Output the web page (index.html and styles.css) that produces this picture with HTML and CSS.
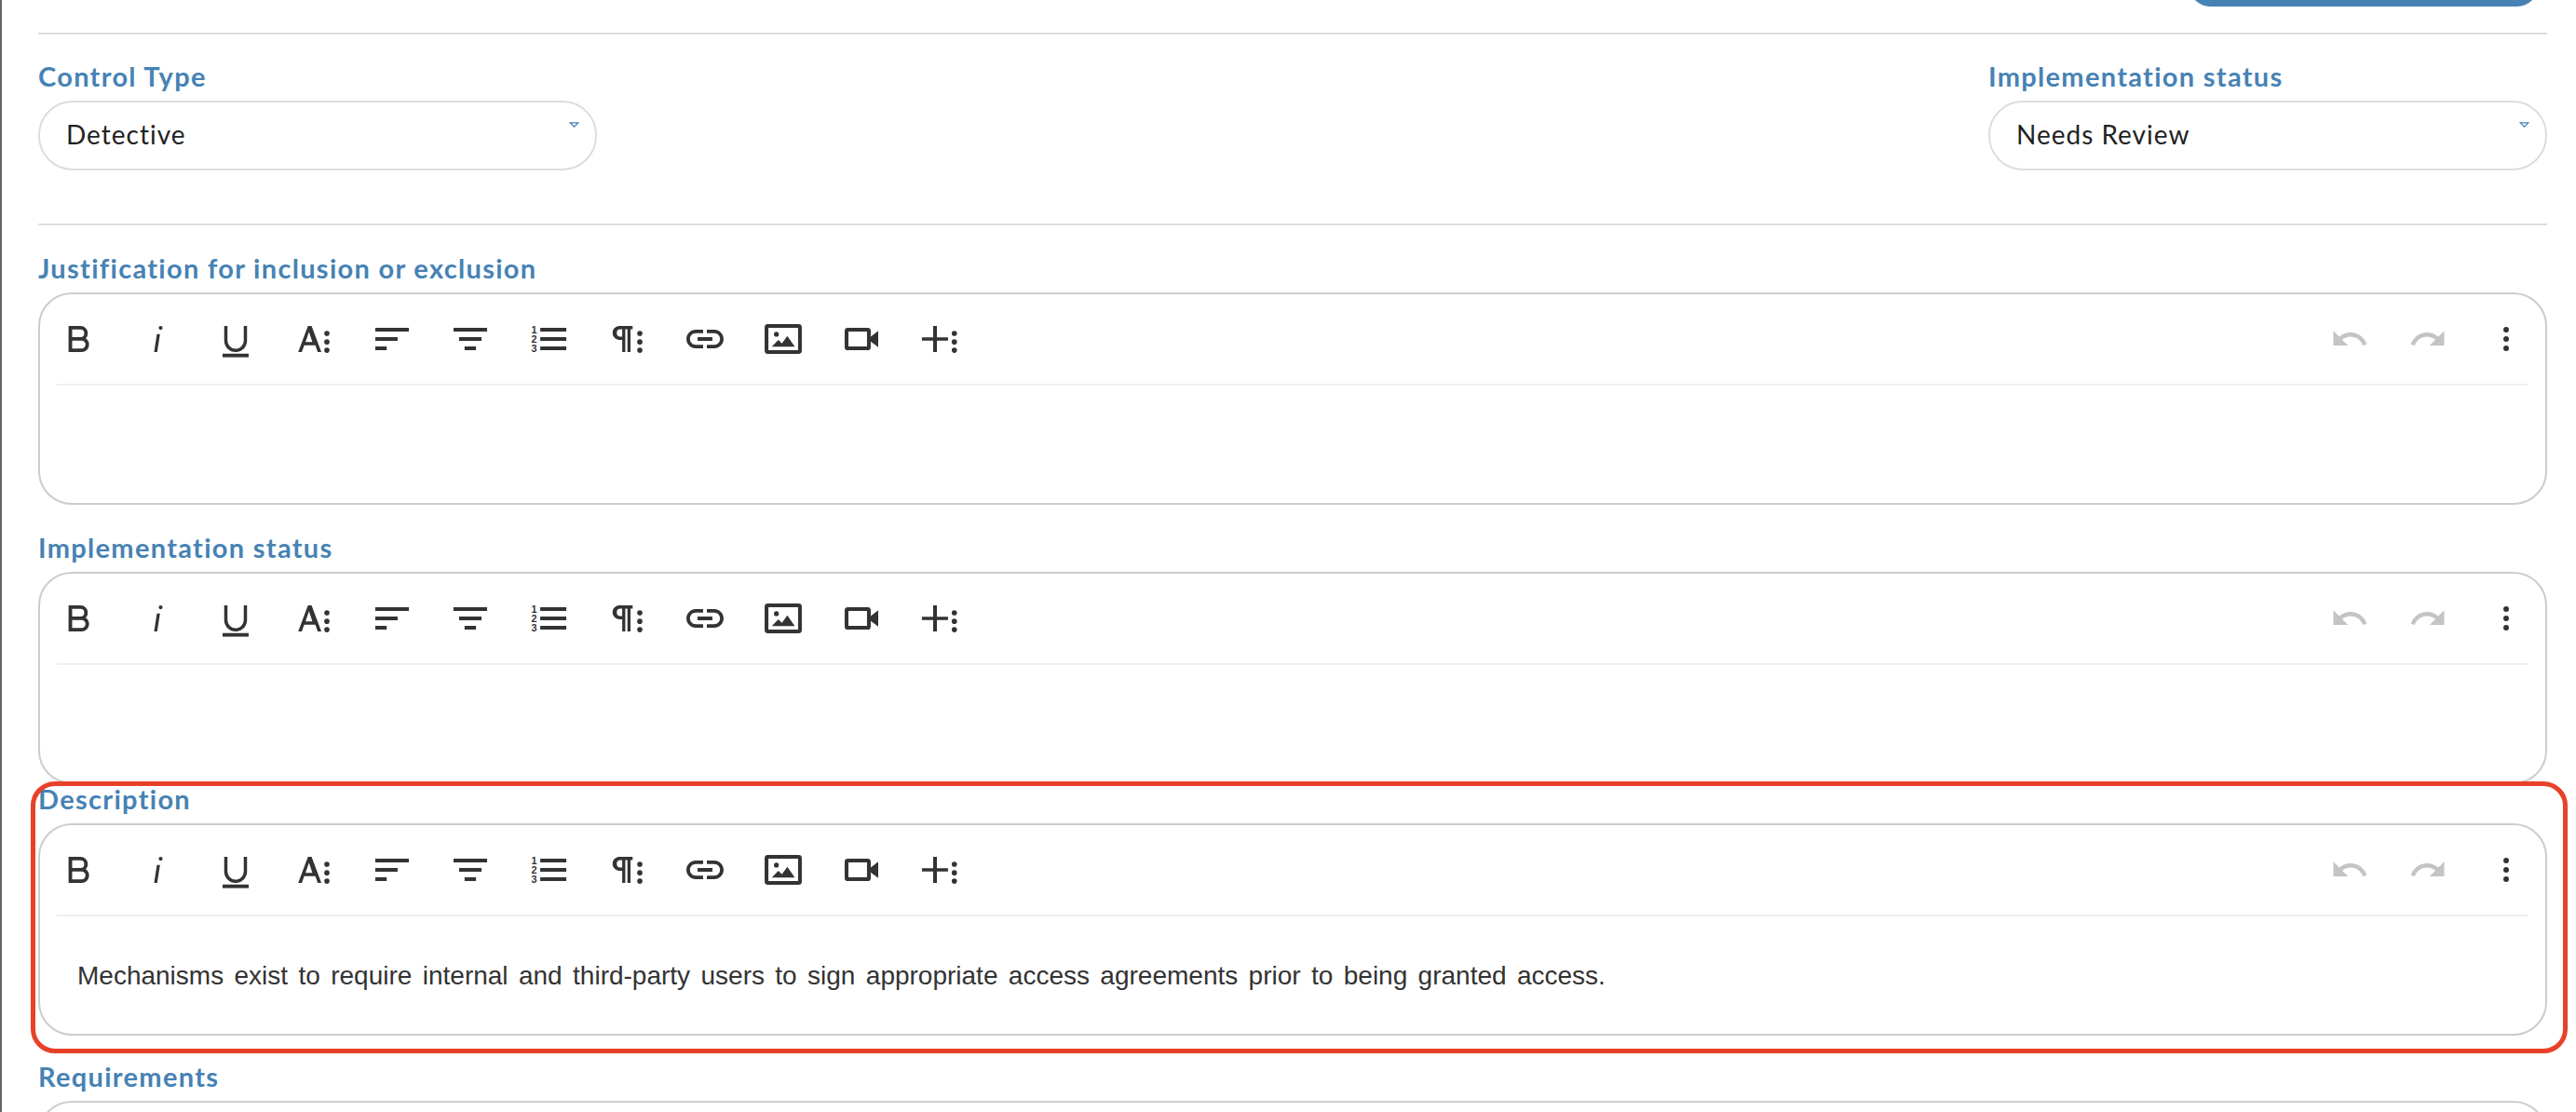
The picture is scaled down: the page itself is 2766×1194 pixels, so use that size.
FILE: index.html
```html
<!DOCTYPE html>
<html lang="en">
<head>
    <meta charset="UTF-8">
    <title>Control details</title>
    <link rel="stylesheet" href="styles.css">
</head>
<body>
    <svg class="sprite" xmlns="http://www.w3.org/2000/svg">
        <symbol id="i-bold" viewBox="0 0 24 24"><path d="M6.6 5.1h6.2a3.4 3.4 0 0 1 0 6.8H6.6zM6.6 11.9h6.9a3.5 3.5 0 0 1 0 7H6.6z" fill="none" stroke="#333" stroke-width="2.2"/></symbol>
        <symbol id="i-italic" viewBox="0 0 24 24"><path d="M11.7 9h1.9l-1.7 11H10z"/><circle cx="14" cy="5.2" r="1.2"/></symbol>
        <symbol id="i-underline" viewBox="0 0 24 24"><path d="M6 4v9a6 6 0 0 0 12 0V4" fill="none" stroke="#333" stroke-width="2"/><path d="M4 21h16v2.2H4z"/></symbol>
        <symbol id="i-font" viewBox="0 0 24 24"><path fill-rule="evenodd" d="M8.4 4h2.2l6 16h-2.2l-1.5-4.1H6.1L4.6 20H2.4zM6.9 13.9h4.2L9 7.5z"/><circle cx="20" cy="8.6" r="1.6"/><circle cx="20" cy="13.8" r="1.6"/><circle cx="20" cy="18.9" r="1.6"/></symbol>
        <symbol id="i-left" viewBox="0 0 24 24"><path d="M1.7 5.1h20.6v2.3H1.7zM1.7 10.9h13.7v2.3H1.7zM1.7 16.6h7v2.3h-7z"/></symbol>
        <symbol id="i-center" viewBox="0 0 24 24"><path d="M1.7 5.1h20.6v2.3H1.7zM5.1 10.9h13.8v2.3H5.1zM8.5 16.6h7v2.3h-7z"/></symbol>
        <symbol id="i-ol" viewBox="0 0 24 24"><path d="M6.9 5.1h16v2.3h-16zM6.9 10.9h16v2.3h-16zM6.9 16.6h16v2.3h-16z"/><text class="ol-num" x="1.4" y="8.8">1</text><text class="ol-num" x="1.4" y="14.4">2</text><text class="ol-num" x="1.4" y="20">3</text></symbol>
        <symbol id="i-para" viewBox="0 0 24 24"><path d="M7 4h8.6v2h-1.3v14h-1.9V6h-1.3v14H9.2v-7.5h-1.2A4.25 4.25 0 0 1 7 4zm1.1 2a2.25 2.25 0 0 0 0 4.5h1.1V6z" fill-rule="evenodd"/><circle cx="20" cy="8.6" r="1.6"/><circle cx="20" cy="13.8" r="1.6"/><circle cx="20" cy="18.9" r="1.6"/></symbol>
        <symbol id="i-link" viewBox="0 0 24 24"><path transform="translate(12 12) scale(1.14) translate(-12 -12)" d="M3.9 12c0-1.71 1.39-3.1 3.1-3.1h4V7H7c-2.76 0-5 2.24-5 5s2.24 5 5 5h4v-1.9H7c-1.71 0-3.1-1.39-3.1-3.1zM8 13h8v-2H8v2zm9-6h-4v1.9h4c1.71 0 3.1 1.39 3.1 3.1s-1.39 3.1-3.1 3.1h-4V17h4c2.76 0 5-2.24 5-5s-2.24-5-5-5z"/></symbol>
        <symbol id="i-image" viewBox="0 0 24 24"><rect x="1.75" y="4.05" width="20.5" height="15.9" rx="0.8" fill="none" stroke="#333" stroke-width="2.3"/><circle cx="7.8" cy="9.1" r="1.5"/><path d="M5 16.7l4-4.2 2.2 2.2 3.3-4.5 4.6 6.5z"/></symbol>
        <symbol id="i-video" viewBox="0 0 24 24"><rect x="2.85" y="6.25" width="13.7" height="11.5" rx="0.8" fill="none" stroke="#333" stroke-width="2.3"/><path d="M17.7 10.5l4.6-3.5v10l-4.6-3.5z"/></symbol>
        <symbol id="i-plus" viewBox="0 0 24 24"><path d="M8 4h2.3v7h6.8v2h-6.8v7H8v-7H1.1v-2H8z"/><circle cx="21" cy="8.6" r="1.6"/><circle cx="21" cy="13.8" r="1.6"/><circle cx="21" cy="18.9" r="1.6"/></symbol>
        <symbol id="i-undo" viewBox="0 0 24 24"><path d="M12.5 8c-2.65 0-5.05.99-6.9 2.6L2 7v9h9l-3.62-3.62c1.39-1.16 3.16-1.88 5.12-1.88 3.54 0 6.55 2.31 7.6 5.5l2.37-.78C21.08 11.03 17.15 8 12.5 8z"/></symbol>
        <symbol id="i-redo" viewBox="0 0 24 24"><path d="M18.4 10.6C16.55 8.99 14.15 8 11.5 8c-4.65 0-8.58 3.03-9.96 7.22L3.9 16c1.05-3.19 4.05-5.5 7.6-5.5 1.95 0 3.73.72 5.12 1.88L13 16h9V7l-3.6 3.6z"/></symbol>
        <symbol id="i-more" viewBox="0 0 24 24"><circle cx="12" cy="6.3" r="1.7"/><circle cx="12" cy="12" r="1.7"/><circle cx="12" cy="17.7" r="1.7"/></symbol>
        <symbol id="i-arrow" viewBox="0 0 11 6"><path d="M1.2 .8h8.6L5.5 5.2z" fill="none" stroke="#4682b4" stroke-width="1.2"/></symbol>
    </svg>

    <div class="page">
        <div class="top-bar">
            <button class="save-button" type="button" aria-label="Save"></button>
        </div>

        <div class="select-row">
            <div class="select-field">
                <label class="field-label">Control Type</label>
                <div class="select-wrap">
                    <select class="select-box"><option>Detective</option></select>
                    <svg class="select-arrow"><use href="#i-arrow"/></svg>
                </div>
            </div>
            <div class="select-field">
                <label class="field-label">Implementation status</label>
                <div class="select-wrap">
                    <select class="select-box"><option>Needs Review</option></select>
                    <svg class="select-arrow"><use href="#i-arrow"/></svg>
                </div>
            </div>
        </div>

        <div class="field">
            <label class="field-label">Justification for inclusion or exclusion</label>
            <div class="editor">
                <div class="toolbar">
                    <button class="tool" type="button"><svg><use href="#i-bold"/></svg></button>
                    <button class="tool" type="button"><svg><use href="#i-italic"/></svg></button>
                    <button class="tool" type="button"><svg><use href="#i-underline"/></svg></button>
                    <button class="tool" type="button"><svg><use href="#i-font"/></svg></button>
                    <button class="tool" type="button"><svg><use href="#i-left"/></svg></button>
                    <button class="tool" type="button"><svg><use href="#i-center"/></svg></button>
                    <button class="tool" type="button"><svg><use href="#i-ol"/></svg></button>
                    <button class="tool" type="button"><svg><use href="#i-para"/></svg></button>
                    <button class="tool" type="button"><svg><use href="#i-link"/></svg></button>
                    <button class="tool" type="button"><svg><use href="#i-image"/></svg></button>
                    <button class="tool" type="button"><svg><use href="#i-video"/></svg></button>
                    <button class="tool" type="button"><svg><use href="#i-plus"/></svg></button>
                    <button class="tool tool-off tool-push" type="button"><svg><use href="#i-undo"/></svg></button>
                    <button class="tool tool-off" type="button"><svg><use href="#i-redo"/></svg></button>
                    <button class="tool" type="button"><svg><use href="#i-more"/></svg></button>
                </div>
                <div class="editor-body"></div>
            </div>
        </div>

        <div class="field field-tight">
            <label class="field-label">Implementation status</label>
            <div class="editor">
                <div class="toolbar">
                    <button class="tool" type="button"><svg><use href="#i-bold"/></svg></button>
                    <button class="tool" type="button"><svg><use href="#i-italic"/></svg></button>
                    <button class="tool" type="button"><svg><use href="#i-underline"/></svg></button>
                    <button class="tool" type="button"><svg><use href="#i-font"/></svg></button>
                    <button class="tool" type="button"><svg><use href="#i-left"/></svg></button>
                    <button class="tool" type="button"><svg><use href="#i-center"/></svg></button>
                    <button class="tool" type="button"><svg><use href="#i-ol"/></svg></button>
                    <button class="tool" type="button"><svg><use href="#i-para"/></svg></button>
                    <button class="tool" type="button"><svg><use href="#i-link"/></svg></button>
                    <button class="tool" type="button"><svg><use href="#i-image"/></svg></button>
                    <button class="tool" type="button"><svg><use href="#i-video"/></svg></button>
                    <button class="tool" type="button"><svg><use href="#i-plus"/></svg></button>
                    <button class="tool tool-off tool-push" type="button"><svg><use href="#i-undo"/></svg></button>
                    <button class="tool tool-off" type="button"><svg><use href="#i-redo"/></svg></button>
                    <button class="tool" type="button"><svg><use href="#i-more"/></svg></button>
                </div>
                <div class="editor-body"></div>
            </div>
        </div>

        <div class="field field-flagged">
            <label class="field-label">Description</label>
            <div class="editor">
                <div class="toolbar">
                    <button class="tool" type="button"><svg><use href="#i-bold"/></svg></button>
                    <button class="tool" type="button"><svg><use href="#i-italic"/></svg></button>
                    <button class="tool" type="button"><svg><use href="#i-underline"/></svg></button>
                    <button class="tool" type="button"><svg><use href="#i-font"/></svg></button>
                    <button class="tool" type="button"><svg><use href="#i-left"/></svg></button>
                    <button class="tool" type="button"><svg><use href="#i-center"/></svg></button>
                    <button class="tool" type="button"><svg><use href="#i-ol"/></svg></button>
                    <button class="tool" type="button"><svg><use href="#i-para"/></svg></button>
                    <button class="tool" type="button"><svg><use href="#i-link"/></svg></button>
                    <button class="tool" type="button"><svg><use href="#i-image"/></svg></button>
                    <button class="tool" type="button"><svg><use href="#i-video"/></svg></button>
                    <button class="tool" type="button"><svg><use href="#i-plus"/></svg></button>
                    <button class="tool tool-off tool-push" type="button"><svg><use href="#i-undo"/></svg></button>
                    <button class="tool tool-off" type="button"><svg><use href="#i-redo"/></svg></button>
                    <button class="tool" type="button"><svg><use href="#i-more"/></svg></button>
                </div>
                <div class="editor-body">
                    <p class="editor-text">Mechanisms exist to require internal and third-party users to sign appropriate access agreements prior to being granted access.</p>
                </div>
            </div>
        </div>

        <div class="field">
            <label class="field-label">Requirements</label>
            <div class="editor"></div>
        </div>
    </div>
</body>
</html>
```

FILE: styles.css
```css
html, body {
    margin: 0;
    height: 1194px;
    overflow: hidden;
    background: white;
}
body {
    border-left: 2px solid #666;
    font-family: "Lato", "Open Sans", sans-serif;
}
.sprite {
    display: none;
}
.page {
    padding: 0 31px 0 39px;
}
.top-bar {
    display: flex;
    justify-content: flex-end;
    height: 35px;
    padding-right: 10px;
    border-bottom: 2px solid #ddd;
}
.save-button {
    width: 374px;
    height: 60px;
    margin-top: -53px;
    background: #4682b4;
    border: none;
    border-radius: 22px;
}
.select-row {
    display: flex;
    justify-content: space-between;
    padding: 27px 0 57px;
    border-bottom: 2px solid #ddd;
    margin-bottom: 28px;
}
.select-field {
    width: 600px;
}
.field-label {
    display: block;
    height: 44px;
    line-height: 36px;
    font-size: 29px;
    font-weight: 700;
    letter-spacing: 1.3px;
    color: #4682b4;
}
.select-wrap {
    position: relative;
}
.select-box {
    display: block;
    width: 100%;
    height: 75px;
    padding: 0 28px 3px;
    appearance: none;
    background: white;
    border: 2px solid #ddd;
    border-radius: 37px;
    font-family: inherit;
    font-size: 28px;
    letter-spacing: 1px;
    color: #222;
    outline: none;
}
.select-arrow {
    position: absolute;
    top: 23px;
    right: 19px;
    width: 11px;
    height: 6px;
}
.field {
    margin-bottom: 28px;
}
.field-tight {
    margin-bottom: -2px;
}
.editor {
    min-height: 228px;
    box-sizing: border-box;
    background: white;
    border: 2px solid #ccc;
    border-radius: 36px;
}
.toolbar {
    display: flex;
    align-items: center;
    height: 96px;
    margin: 0 18px;
    border-bottom: 2px solid #efefef;
}
.tool {
    display: flex;
    align-items: center;
    justify-content: center;
    flex: none;
    width: 84px;
    height: 84px;
    padding: 0;
    background: none;
    border: none;
    fill: #333;
}
.toolbar .tool:first-child {
    margin-left: -18px;
}
.toolbar .tool:last-child {
    margin-right: -18px;
}
.tool svg {
    width: 42px;
    height: 42px;
}
.tool-off {
    fill: #c4c4c4;
}
.tool-push {
    margin-left: auto;
}
.ol-num {
    font-family: "Liberation Sans", sans-serif;
    font-size: 6.2px;
    font-weight: 700;
}
.editor-body {
    display: flex;
    align-items: center;
    box-sizing: border-box;
    height: 124px;
    padding: 3px 40px 0;
}
.editor-text {
    margin: 0;
    font-family: "Liberation Sans", Arial, sans-serif;
    font-size: 28px;
    word-spacing: 3.6px;
    color: #333;
}
.field-flagged {
    position: relative;
    margin-bottom: 26px;
}
.field-flagged::after {
    content: "";
    position: absolute;
    top: -1px;
    left: -8px;
    right: -22px;
    bottom: -19px;
    border: 5px solid #e8412a;
    border-radius: 26px;
    pointer-events: none;
}
```
